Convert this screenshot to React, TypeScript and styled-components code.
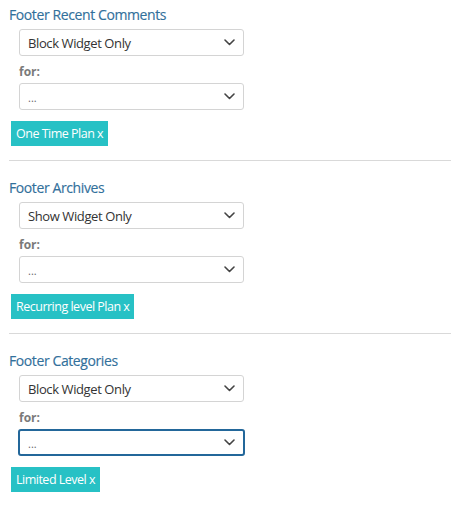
import styled, { createGlobalStyle } from 'styled-components';

const GlobalStyle = createGlobalStyle`
  body {
    margin: 0;
    background: #fff;
    font-family: 'Open Sans', 'Noto Sans', sans-serif;
  }
`;

const widgets = [
  { title: 'Footer Recent Comments', mode: 'Block Widget Only', tag: 'One Time Plan', focused: false },
  { title: 'Footer Archives', mode: 'Show Widget Only', tag: 'Recurring level Plan', focused: false },
  { title: 'Footer Categories', mode: 'Block Widget Only', tag: 'Limited Level', focused: true },
];

const Chevron = () => (
  <svg width="11" height="7" viewBox="0 0 11 7" fill="none">
    <path d="M1 1l4.5 4.5L10 1" stroke="#444" strokeWidth="1.6" strokeLinecap="round" strokeLinejoin="round" />
  </svg>
);

const App = () => {
  return (
    <Page>
      <GlobalStyle />
      {widgets.map((w, i) => (
        <Section key={w.title} $first={i === 0}>
          <Title>{w.title}</Title>
          <Fields>
            <Select>
              <SelectText>{w.mode}</SelectText>
              <Chevron />
            </Select>
            <Label>for:</Label>
            <Select $focused={w.focused}>
              <Placeholder>...</Placeholder>
              <Chevron />
            </Select>
          </Fields>
          <Tag>
            {w.tag} <span>x</span>
          </Tag>
        </Section>
      ))}
    </Page>
  );
};

const Page = styled.div`
  width: 451px;
  padding-left: 9px;
  box-sizing: border-box;
`;

const Section = styled.div<{ $first: boolean }>`
  padding: ${(p) => (p.$first ? '5px' : '17px')} 0 14px;
  border-top: ${(p) => (p.$first ? 'none' : '1px solid #d9d9d9')};
`;

const Title = styled.div`
  font-size: 14px;
  line-height: 20px;
  color: #32709b;
  letter-spacing: -0.4px;
  -webkit-text-stroke: 0.15px #32709b;
`;

const Fields = styled.div`
  width: 225px;
  margin: 4px 0 0 10px;
`;

const Select = styled.div<{ $focused?: boolean }>`
  height: 27px;
  box-sizing: border-box;
  display: flex;
  align-items: center;
  justify-content: space-between;
  padding: 0 8px 0 8px;
  border: 1px solid #d4d4d4;
  border-radius: 3px;
  background: #fff;
  ${(p) =>
    p.$focused &&
    `
    border: 2px solid #23679a;
    margin-left: -1px;
    width: calc(100% + 2px);
  `}
`;

const SelectText = styled.span`
  font-size: 13px;
  color: #333;
  letter-spacing: -0.4px;
`;

const Placeholder = styled.span`
  font-size: 11px;
  color: #666;
  margin-top: 2px;
`;

const Label = styled.div`
  font-size: 12px;
  font-weight: 700;
  color: #7a7a7a;
  line-height: 16px;
  margin: 8px 0 3px;
`;

const Tag = styled.div`
  display: inline-block;
  margin: 11px 0 0 2px;
  padding: 0 5px;
  height: 25px;
  line-height: 25px;
  background: #27c1c5;
  color: #fff;
  font-size: 12.5px;
  letter-spacing: -0.5px;
`;

export default App;
